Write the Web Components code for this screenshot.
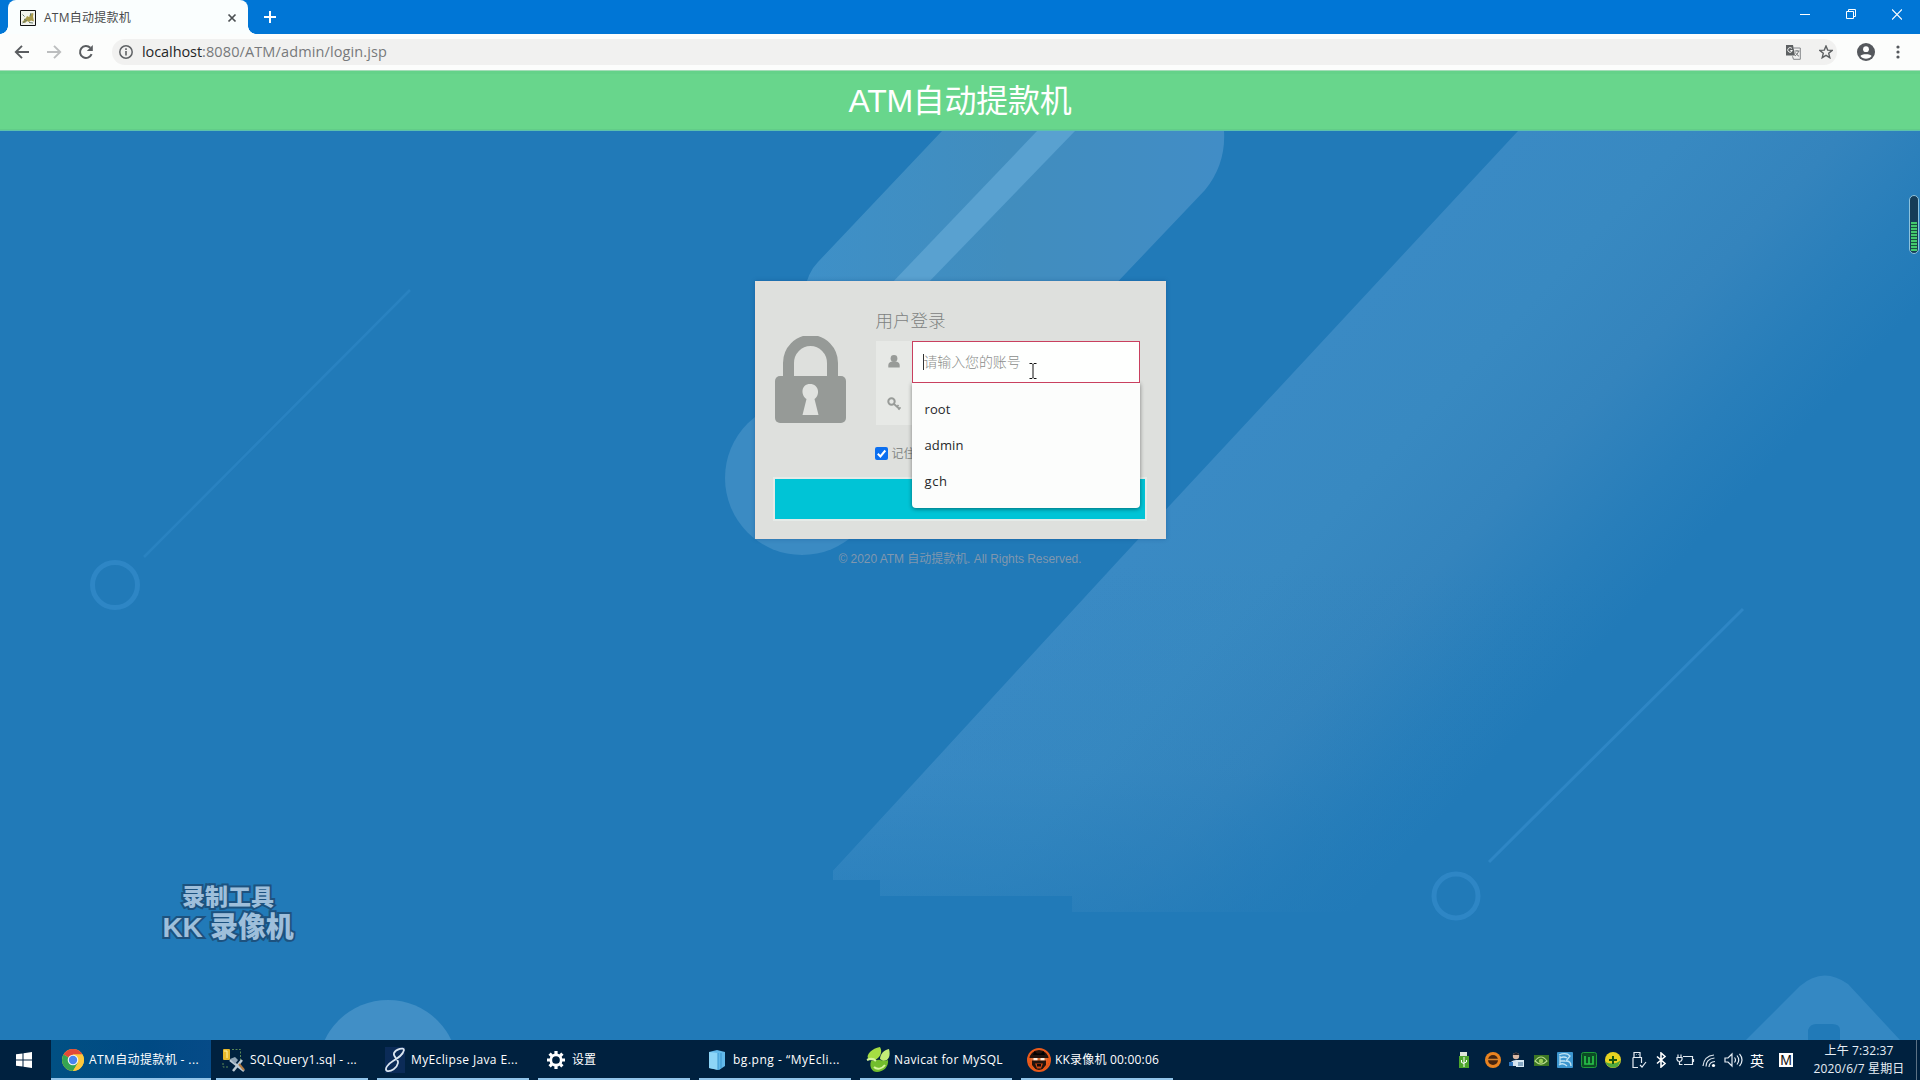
<!DOCTYPE html>
<html lang="zh-CN">
<head>
<meta charset="utf-8">
<title>ATM自动提款机</title>
<style>
html,body{margin:0;height:100%;overflow:hidden;background:#217ab8}
body{display:flex;flex-direction:column;width:1920px;height:1080px;font-family:"Open Sans","Noto Sans CJK SC",sans-serif;font-size:12px}
</style>
</head>
<body>
<browser-tabs></browser-tabs>
<browser-toolbar></browser-toolbar>
<page-banner><fit-text w="223">ATM自动提款机</fit-text></page-banner>
<login-page>
  <login-card></login-card>
  <fit-text slot="footer" w="243">© 2020 ATM 自动提款机. All Rights Reserved.</fit-text>
</login-page>
<task-bar></task-bar>
<script>
const def=(name,html,after)=>customElements.define(name,class extends HTMLElement{
  connectedCallback(){
    if(this.shadowRoot)return;
    const t=document.createElement('template');
    t.innerHTML=html;
    this.attachShadow({mode:'open'}).append(t.content.cloneNode(true));
    if(after)after(this);
  }
});

def('browser-tabs',`<style>
:host{display:flex;height:34px;flex:none;background:#0076d6;align-items:stretch;padding-left:8px;color:#fff}
.tab{width:240px;box-sizing:border-box;background:#fafefe;border-radius:8px 8px 0 0;display:flex;align-items:center;padding:1px 9px 0 12px;color:#48494b;position:relative}
.tab:before,.tab:after{content:"";position:absolute;bottom:0;width:8px;height:8px}
.tab:before{left:-8px;background:radial-gradient(circle at 0 0,transparent 7.5px,#fafefe 8px)}
.tab:after{right:-8px;background:radial-gradient(circle at 100% 0,transparent 7.5px,#fafefe 8px)}
fit-text{margin-left:8px;line-height:18px}
svg{display:block;flex:none}.plus{margin:11px 0 0 16px}.grow{flex:1}
.win{display:flex;gap:36px;margin:9px 18px 0 0}
</style>
<div class="tab">
<svg width="16" height="16" viewBox="0 0 16 16"><path d="M.5.5h15v15H.5z" fill="#f3f4ee" stroke="#111"/><path d="M2 12c2-1 2-3 4-4l1-2 2 1 3-4 1.500.5-.5 3 1 5-3-1-2 1.500-2-1-2 2z" fill="#a89a4c"/><path d="M2.500 4.500l2 2M2.500 13l3-2M9 12.500l4 .5M10 6l1-3M4 9l3 2" stroke="#667a6a" fill="none"/></svg>
<fit-text w="87">ATM自动提款机</fit-text><span class="grow"></span>
<svg width="14" height="14" viewBox="0 0 14 14"><path d="M3.500 3.500l7 7M10.500 3.500l-7 7" stroke="#4b4f52" stroke-width="1.700"/></svg>
</div>
<svg class="plus" width="12" height="12" viewBox="0 0 12 12"><path d="M6 0v12M0 6h12" stroke="#fff" stroke-width="2"/></svg>
<div class="grow"></div>
<div class="win">
<svg width="10" height="11"><path d="M0 5.500h10" stroke="#fff"/></svg>
<svg width="10" height="11"><path d="M.5 2.500h7v7h-7zM2.500 2.500v-2h7v7h-2" stroke="#fff" fill="none"/></svg>
<svg width="10" height="11"><path d="M0 .5l10 10M10 .5l-10 10" stroke="#fff" stroke-width="1.200"/></svg>
</div>`);

def('browser-toolbar',`<style>
:host{display:flex;flex:none;background:#fcfdfc;border-bottom:1px solid #a5ddb9;align-items:center;padding:0 13px 0 13px;height:36px}
svg{display:block;flex:none}.nav{display:flex;gap:14px;margin-right:17px}
.omni{flex:1;display:flex;align-items:center;height:26px;border-radius:13px;background:#f1f1f0;padding:0 10px 0 7px;margin-right:20px;font-size:14.500px;color:#77797b}
.omni fit-text{line-height:20px}.host{margin-left:9px;color:#252628}.gap{flex:1}
</style>
<div class="nav">
<svg width="18" height="18" viewBox="0 0 18 18"><path d="M16 9H3M9 2.800L2.800 9 9 15.200" fill="none" stroke="#5a5d60" stroke-width="1.900"/></svg>
<svg width="18" height="18" viewBox="0 0 18 18"><path d="M2 9h13M9 2.800L15.200 9 9 15.200" fill="none" stroke="#bcbebf" stroke-width="1.900"/></svg>
<svg width="18" height="18" viewBox="0 0 18 18"><path d="M14.600 11.200A6 6 0 1 1 13.300 4.800" fill="none" stroke="#5a5d60" stroke-width="2"/><path d="M15.800 2v6h-6z" fill="#5a5d60"/></svg>
</div>
<div class="omni">
<svg width="14" height="14" viewBox="0 0 14 14"><circle cx="7" cy="7" r="6.200" fill="none" stroke="#5f6265" stroke-width="1.500"/><path d="M7 6v4.500M7 3.300v1.600" stroke="#5f6265" stroke-width="1.600"/></svg>
<fit-text class="host" w="60">localhost</fit-text><fit-text w="185">:8080/ATM/admin/login.jsp</fit-text>
<span class="gap"></span>
<svg width="15" height="15" viewBox="0 0 15 15" style="margin-right:18px"><path d="M0 0h7l2 10.500H0z" fill="#5d6062"/><path d="M7 3h7.300v11.300H7.500l-1-3" fill="none" stroke="#85878a"/><path d="M6 3.700A2.300 2.300 0 1 0 6.300 5.500H4.300" fill="none" stroke="#fff" stroke-width="1"/><path d="M8.500 6h5M11 5v1M12.500 6c-.5 2.500-2 4-3.500 5M9.500 7.500c1 2 2 3 3.500 3.700" fill="none" stroke="#777a7c"/></svg>
<svg width="14" height="14" viewBox="0 0 14 14" style="margin-right:-6px"><path d="M7 1l1.700 4.100 4.500.3-3.500 2.900 1.100 4.400L7 10.300l-3.800 2.400 1.100-4.400L.8 5.400l4.500-.3z" fill="none" stroke="#5d6062" stroke-width="1.400"/></svg>
</div>
<svg width="18" height="18" viewBox="0 0 18 18"><circle cx="9" cy="9" r="9" fill="#55585d"/><circle cx="9" cy="6.200" r="2.900" fill="#fff"/><path d="M3.400 13c1-2.500 10.200-2.500 11.200 0-2.500 3.700-8.700 3.700-11.200 0z" fill="#fff"/></svg>
<svg width="4" height="14" viewBox="0 0 4 14" style="margin:0 7px 0 21px"><g fill="#55585d"><circle cx="2" cy="2" r="1.600"/><circle cx="2" cy="7" r="1.600"/><circle cx="2" cy="12" r="1.600"/></g></svg>`);

def('page-banner',`<style>:host{display:flex;height:59px;flex:none;border-bottom:1px solid #5cc2ad;background:#68d68c;color:#fff;font:32px/58px "Liberation Sans","Noto Sans CJK SC",sans-serif;justify-content:center;align-items:center;box-shadow:inset 0 -1px #62cd88,inset 0 3px #64d289}</style><slot></slot>`);

def('login-page',`<style>
:host{display:flex;flex-direction:column;align-items:center;flex:1;position:relative;overflow:hidden;background:#217ab8}
.bg{position:absolute;left:0;top:0}
.main,.foot{display:block;position:relative}
.main{margin-top:150px}.foot{margin-top:11px;font:12px/18px "Liberation Sans","Noto Sans CJK SC",sans-serif;color:#8097ae}
.mark{position:absolute;left:161px;top:752px;width:134px;display:flex;flex-direction:column;align-items:center;font-family:"Liberation Sans","Noto Sans CJK SC",sans-serif;font-weight:900;color:#9ebfdb;-webkit-text-stroke:4px #1d527f;paint-order:stroke fill}
.top{font-size:23px;line-height:28px;margin-right:0}.low{font-size:28px;line-height:34px}
.meter{position:absolute;left:1909px;top:64px;width:8px;height:57px;border:1px solid #8ec3dd;border-radius:5px;background:#153c57;overflow:hidden}
.meter:after{content:"";position:absolute;left:1px;right:1px;top:26px;bottom:2px;background:repeating-linear-gradient(#43c96e 0 2px,#17533e 2px 3px)}
</style>
<svg class="bg" width="1920" height="909" viewBox="0 131 1920 909">
<defs>
<linearGradient id="g" gradientUnits="userSpaceOnUse" x1="1120" y1="560" x2="1420" y2="840"><stop offset="0" stop-color="#3a8ac4"/><stop offset=".3" stop-color="#3889c1"/><stop offset=".58" stop-color="#3484bd"/><stop offset=".82" stop-color="#287eba"/><stop offset="1" stop-color="#217ab8"/></linearGradient>
<linearGradient id="v" x1="0" y1="560" x2="0" y2="912" gradientUnits="userSpaceOnUse"><stop offset="0" stop-color="#217ab8" stop-opacity="0"/><stop offset=".6" stop-color="#217ab8" stop-opacity=".12"/><stop offset="1" stop-color="#217ab8" stop-opacity=".6"/></linearGradient>
<linearGradient id="b" x1="800" y1="0" x2="1220" y2="0" gradientUnits="userSpaceOnUse"><stop offset="0" stop-color="#3e90c8"/><stop offset=".5" stop-color="#418dbe"/><stop offset="1" stop-color="#418dc6"/></linearGradient>
</defs>
<path d="M1518 131L1119 560 833 871V880H880V896H1072V912H1380L1920 560V131z" fill="url(#g)"/>
<path d="M1119 560L833 871V880H880V896H1072V912H1380L1920 560z" fill="url(#v)"/>
<path d="M942 131L818 262Q808 272 804 292H1108L1205 190Q1226 164 1224 131z" fill="url(#b)"/>
<path d="M1037 131h38L925 286h-36z" fill="#59a1d0"/>
<circle cx="802" cy="478" r="77" fill="#3b8bc3"/>
<circle cx="388" cy="1070" r="70" fill="#418fc6"/>
<path fill-rule="evenodd" d="M1746 1040L1800 986Q1823 966 1848 984L1900 1040zM1808 1040v-10q2-6 8-6h16q8 0 8 6v10z" fill="#3488c3"/>
<g fill="none" stroke="#2e86c5"><circle cx="115" cy="585" r="22.500" stroke-width="5"/><path d="M144 557L410 290" stroke-width="2.500" stroke-opacity=".7"/><circle cx="1456" cy="896" r="22" stroke-width="5"/><path d="M1489 862L1743 609" stroke-width="3"/></g>
</svg>
<div class="mark"><fit-text class="top" w="92">录制工具</fit-text><fit-text class="low" w="131">KK 录像机</fit-text></div>
<div class="meter"></div>
<div class="main"><slot></slot></div><div class="foot"><slot name="footer"></slot></div>`);

def('account-field',`<style>
:host{display:block;width:228px;height:84px;position:relative}
.input{box-sizing:border-box;width:228px;height:42px;border:1px solid #c9405f;background:#fefffe;display:flex;align-items:center;padding:0 0 0 10px;color:#8a8d8a;font-size:14px;position:relative;z-index:3}
.input fit-text{margin-top:-2px;font-weight:300}
.caret{width:1px;height:16px;background:#333}
.cursor{position:absolute;left:116px;top:21px}
.menu{position:absolute;left:0;top:42px;width:228px;height:125px;box-sizing:border-box;padding:8px 0;background:#fcfdfc;border-radius:0 0 4px 4px;box-shadow:0 1px 4px rgba(0,0,0,.45);z-index:2;font:13px/36px "Open Sans",sans-serif;color:#27282a}
.menu div{height:36px;padding-left:13px}
</style>
<div class="input"><span class="caret"></span><fit-text w="97">请输入您的账号</fit-text>
<svg class="cursor" width="8" height="16" viewBox="0 0 8 16"><path d="M.5.5h2.500l1 1 1-1h2.500M4 1.500v13M.5 15.500h2.500l1-1 1 1h2.500" fill="none" stroke="#111"/></svg></div>
<div class="menu"><div><fit-text w="26">root</fit-text></div><div><fit-text w="39">admin</fit-text></div><div><fit-text w="23">gch</fit-text></div></div>`);

def('login-card',`<style>
:host{display:flex;flex-direction:column;box-sizing:border-box;width:411px;height:258px;padding:25px 18px 17px;border:2px solid #e3dfda;background:#dee0dd;box-shadow:0 0 4px rgba(10,60,120,.35);font-family:"Liberation Sans","Noto Sans CJK SC",sans-serif}
.row{display:flex;gap:30px}.lock{margin-top:28px;flex:none;display:block}
.form{display:flex;flex-direction:column;flex:1}
h2{margin:0;font-weight:300;font-size:17.500px;line-height:26px;color:#7d827f;height:33px}
.group{display:flex}.addons{width:36px;display:flex;flex-direction:column;background:#e7e9e6}
.addons svg{display:block;margin:auto}
.rem{display:flex;align-items:center;gap:4px;margin-top:21px;height:15px;font-size:12px;color:#858987;margin-left:-1px}
.rem span{line-height:15px;padding-top:1px}
button{margin:18px 0 0;border:0;width:370px;height:40px;background:#00c4d6;box-shadow:0 0 0 2px #e5ebe8;display:block;padding:0}
</style>
<div class="row">
<svg class="lock" width="71" height="87" viewBox="0 0 71 87"><path d="M13.500 42V27a22 22.500 0 0 1 44 0v15" fill="none" stroke="#969a97" stroke-width="11"/><rect y="40" width="71" height="47" rx="5" fill="#969a97"/><path d="M35 48c9 0 10.500 11 4.500 15l4 16H27.500l4-16C25.500 59 26 48 35 48z" fill="#e0e2df"/></svg>
<div class="form"><h2>用户登录</h2>
<div class="group"><div class="addons">
<svg width="12" height="13" viewBox="0 0 12 13"><circle cx="6" cy="3.500" r="3.400" fill="#989b98"/><path d="M.3 12.500V10Q.5 7 4 6.500h4q3.500.5 3.700 3.500v2.500z" fill="#989b98"/></svg>
<svg width="14" height="14" viewBox="0 0 14 14"><circle cx="4.500" cy="4.500" r="3.200" fill="none" stroke="#989b98" stroke-width="2"/><path d="M7 7l5.500 5M9.500 10.500l2-2.500M11.500 12.800l2-2.500" stroke="#989b98" stroke-width="1.700"/></svg>
</div><account-field></account-field></div>
<div class="rem"><svg width="13" height="13" viewBox="0 0 13 13"><rect width="13" height="13" rx="2" fill="#0b6ff0"/><path d="M2.800 6.800l2.600 2.700L10.300 3.500" fill="none" stroke="#fff" stroke-width="2"/></svg><span>记住</span></div>
</div></div>
<button></button>`);

def('task-button',`<style>
:host{display:flex;box-sizing:border-box;width:152px;height:40px;border-bottom:2px solid #91c4ea;align-items:center;padding:1px 0 0 6px;gap:4px;font-size:12px;line-height:20px;color:#fff}
:host([active]){width:160px;background:linear-gradient(90deg,#015083,#004a84 60%,#064b88);padding-left:10px}
.i{display:flex;width:24px;height:24px;align-items:center;justify-content:center;flex:none}
</style><span class="i"><slot name="icon"></slot></span><slot></slot>`);

def('task-bar',`<style>
:host{display:flex;height:40px;flex:none;background:#00213f;color:#fff}
svg{display:block}.start{width:51px;display:flex;align-items:center;justify-content:center;box-sizing:border-box;padding-right:3px}
.apps{display:flex;gap:9px}.apps task-button[active]{margin-right:-4px}
.tray{display:flex;align-items:center;margin-left:auto;width:361px}
.tray svg,.ime{width:24px;flex:none}.ime{text-align:center;font-size:14px;line-height:20px;font-family:"Noto Sans CJK SC",sans-serif}
.m{display:block;width:14px;margin-left:10px;background:#fff;color:#111;font:14px/14px "Liberation Sans",sans-serif;height:14px;text-align:center}
.clock{display:flex;flex-direction:column;align-items:center;justify-content:center;line-height:18px;width:92px;font-size:12px;color:#e6eef6}
.end{width:3px;margin-left:11px;border-left:1px solid #5c7184}
</style>
<div class="start"><svg width="16" height="16"><path d="M0 2.300l6.500-.9v6.100H0zM7.500 1.300L16 0v7.500H7.500zM0 8.500h6.500v6.100L0 13.700zM7.500 8.500H16V16l-8.500-1.300z" fill="#fff"/></svg></div>
<div class="apps">
<task-button active><svg slot="icon" width="22" height="22" viewBox="0 0 22 22"><circle cx="11" cy="11" r="11" fill="#fdc83c"/><path d="M11 11L1.500 5.500A11 11 0 0 1 20.500 5.500H11z" fill="#e24939"/><path d="M11 11L1.500 5.500A11 11 0 0 0 11 22l5-8z" fill="#35a552"/><path d="M11 5.500h9.500A11 11 0 0 1 11 22l5-8.500z" fill="#fdc83c"/><circle cx="11" cy="11" r="5.300" fill="#f5f5f5"/><circle cx="11" cy="11" r="4.200" fill="#4a85ee"/></svg><fit-text w="110">ATM自动提款机 - ...</fit-text></task-button>
<task-button><svg slot="icon" width="24" height="24" viewBox="0 0 24 24"><rect x="1" y="1" width="7" height="11" rx="1" fill="#e8b82b"/><path d="M2 3h3v7" stroke="#fff3a8" fill="none"/><path d="M10 1.500h8.500V12M1 15v4h6" stroke="#5b8a57" fill="none" stroke-dasharray="2 1.500"/><path d="M11 23L20 12M8 12l14 11" stroke="#bccbd6" stroke-width="2.500"/><path d="M8 11l5-2 3 3-3 4z" fill="#8fa3b5"/><path d="M17 16l5 6" stroke="#b67d44" stroke-width="2"/></svg><fit-text w="107">SQLQuery1.sql - ...</fit-text></task-button>
<task-button><svg slot="icon" width="24" height="26" viewBox="0 0 24 26"><rect x="2" width="20" height="26" fill="#0b2b57"/><path d="M21 3C21 0 13 2 11 6c-1.500 4 5 6 4 10-1 5-7 9-11 8-3-2 1-7 6-10C15 11 20 8 21 3z" fill="none" stroke="#dbe6f0" stroke-width="1.700"/></svg><fit-text w="107">MyEclipse Java E...</fit-text></task-button>
<task-button><svg slot="icon" width="18" height="18" viewBox="0 0 18 18"><circle cx="9" cy="9" r="5.200" fill="none" stroke="#fff" stroke-width="2.700"/><g stroke="#fff" stroke-width="3.200"><path d="M9 0v3M9 15v3M0 9h3M15 9h3M2.600 2.600l2.200 2.200M13.200 13.200l2.200 2.200M2.600 15.400l2.200-2.200M13.200 4.800l2.200-2.200"/></g></svg><fit-text w="24">设置</fit-text></task-button>
<task-button><svg slot="icon" width="18" height="22" viewBox="0 0 18 20"><path d="M1 2l8-2 8 2v14l-6 4-10-2z" fill="#62b9ea"/><path d="M1 2l9 1v17l-9-2z" fill="#8dd5f7"/><path d="M10 3v17M13 3v15" stroke="#3996cf"/></svg><fit-text w="107">bg.png - “MyEcli...</fit-text></task-button>
<task-button><svg slot="icon" width="24" height="26" viewBox="0 0 24 26"><path d="M2 11C0 8 6 1 14 0c3 5 0 11-5 13-4 1-6 0-7-2z" fill="#a5dd43"/><path d="M14 12c0-5 4-9 9-10 2 8-1 12-6 12z" fill="#c3ed76"/><path d="M5 14c6 0 6-2 9-1s6 1 8 0c1 7-5 12-11 12-5 0-8-5-6-11z" fill="#72bd2d"/><path d="M1 13c4-2 7-1 9 1M8 20c3 3 8 2 11-2" stroke="#d5f69c" stroke-width="2" fill="none"/></svg><fit-text w="109">Navicat for MySQL</fit-text></task-button>
<task-button><svg slot="icon" width="24" height="24" viewBox="0 0 24 24"><circle cx="12" cy="12" r="11" fill="#21130d" stroke="#e85a1b" stroke-width="2"/><path d="M1 10h4v7l5 6Q2 20 1 10zM23 10h-4v7l-5 6q8-3 9-13z" fill="#e85a1b"/><path d="M6 7l1.500-4L10 5.500h4L16.500 3 18 7z" fill="#000"/><path d="M4 10h16v2.500H4z" fill="#d8713a"/><path d="M6.500 10h4v2.200h-4zM13.500 10h4v2.200h-4z" fill="#fff0df"/><path d="M8 15.500h8l-2 5h-4z" fill="#c94512"/><path d="M10 16h4v2.500h-4z" fill="#120a06"/></svg><fit-text w="104">KK录像机 00:00:06</fit-text></task-button>
</div>
<div class="tray" style="width:361px">
<svg viewBox="0 0 24 16" height="16" style="margin-right:5px"><path d="M8 0h7v4H8z" fill="#dfe7da"/><path d="M7 4h10v12H7z" fill="#4da52b"/><path d="M12 5v10M9.500 8v2.500l2.500 1M14.500 8v2l-2.500 1" stroke="#fff" fill="none"/></svg>
<svg height="16" viewBox="0 0 24 16"><circle cx="12" cy="8" r="8" fill="#e98320"/><circle cx="12" cy="8" r="5" fill="#45240f"/><path d="M5 7.500h14" stroke="#d9842d" stroke-width="1.500"/></svg>
<svg height="16" viewBox="0 0 24 16"><circle cx="11" cy="4" r="3.200" fill="#d8b7a3"/><path d="M7.500 3q3.500-5 7 0" fill="#23232c"/><path d="M5 14q0-6 6-6t5 6z" fill="#d4e2ee"/><path d="M11 8h8v7h-8z" fill="#d9e9f2"/><path d="M13 11h5M13 13h5" stroke="#356794"/><path d="M4 10h4v4H4z" fill="#2e73b9"/></svg>
<svg height="16" viewBox="0 0 24 16"><path d="M5 3h15v11H5z" fill="#3d7723"/><path d="M6 9q6-8 12 0-6 6-12 0z" fill="none" stroke="#b8d98c" stroke-width="1.200"/><circle cx="12" cy="9" r="2.200" fill="#9dce5a"/></svg>
<svg height="16" viewBox="0 0 24 16"><rect x="4" width="16" height="16" rx="1" fill="#3c96cf"/><path d="M6 3q7-3 11 1l-4 5q5 0 5 5M7 6q4-2 7 0M7 9h5M6 13q4-3 8 1M7 4v9" fill="none" stroke="#bfe4f5" stroke-width="1.300"/></svg>
<svg height="16" viewBox="0 0 24 16"><rect x="4.500" y=".5" width="15" height="15" rx="2" fill="#0b4b25" stroke="#1e9c3a"/><path d="M8 4v8h8V4M12 5v7" fill="none" stroke="#29c24a" stroke-width="1.700"/></svg>
<svg height="16" viewBox="0 0 24 16"><circle cx="12" cy="8" r="8" fill="#e6d221"/><path d="M4.500 10A8 8 0 0 0 17 14L20 8q-7 6-15.500 2z" fill="#4ea93e"/><path d="M12 4v8M8 8h8" stroke="#17550f" stroke-width="2"/></svg>
<svg height="18" viewBox="0 0 24 18"><path d="M9 6V1.500h6V6M11 3.500h.5M13 3.500h.5M8 6.500h8.500V12M8 6.500v10h5M15 14l2 2 4-5" fill="none" stroke="#e4ecf3" stroke-width="1.200"/></svg>
<svg height="16" viewBox="0 0 24 16"><path d="M8 4.500l8 7-4 3.500V1L16 4.500l-8 7" fill="none" stroke="#fff" stroke-width="1.600"/></svg>
<svg height="16" viewBox="0 0 24 16"><path d="M11 12.500H19.500V4.500H10M20.500 7v3M5 2.500v3M8 2.500v3M4 5.500h5v2q-.5 2-2.500 2T4 7.500zM6.500 9.500v3h3" fill="none" stroke="#e4ecf3" stroke-width="1.200"/></svg>
<svg height="16" viewBox="0 0 24 16"><g fill="none" stroke="#dce5ed" stroke-width="1.200"><path d="M6 14Q7 4 17 3M9 14.500Q9 7 17.500 6M12 15Q12 10 18 9.500"/></g><circle cx="16.500" cy="13.500" r="1.600" fill="#fff"/></svg>
<svg height="16" viewBox="0 0 24 16"><path d="M4 6h3l4-4v12L7 10H4zM13.500 5.500q2 2.500 0 5M16 3.500q3.500 4.500 0 9M18.500 1.800q5 6 0 12.400" fill="none" stroke="#e4ecf3" stroke-width="1.200"/></svg>
<span class="ime">英</span>
<span class="m">M</span>
</div>
<div class="clock"><fit-text w="69">上午 7:32:37</fit-text><fit-text w="91">2020/6/7 星期日</fit-text></div>
<div class="end"></div>`);

/* Spaces its letters so that the text fills the width in its w attribute.
   Defined last: every container's font is in place when it measures. */
def('fit-text',`<style>:host{display:inline-block;white-space:pre;flex:none}span{display:inline-block}</style><span><slot></slot></span>`,el=>{
  const s=el.shadowRoot.querySelector('span'),w=+el.getAttribute('w');
  s.style.letterSpacing=((w-s.getBoundingClientRect().width)/el.textContent.length)+'px';
  el.style.width=w+'px';
});
</script>
</body>
</html>
